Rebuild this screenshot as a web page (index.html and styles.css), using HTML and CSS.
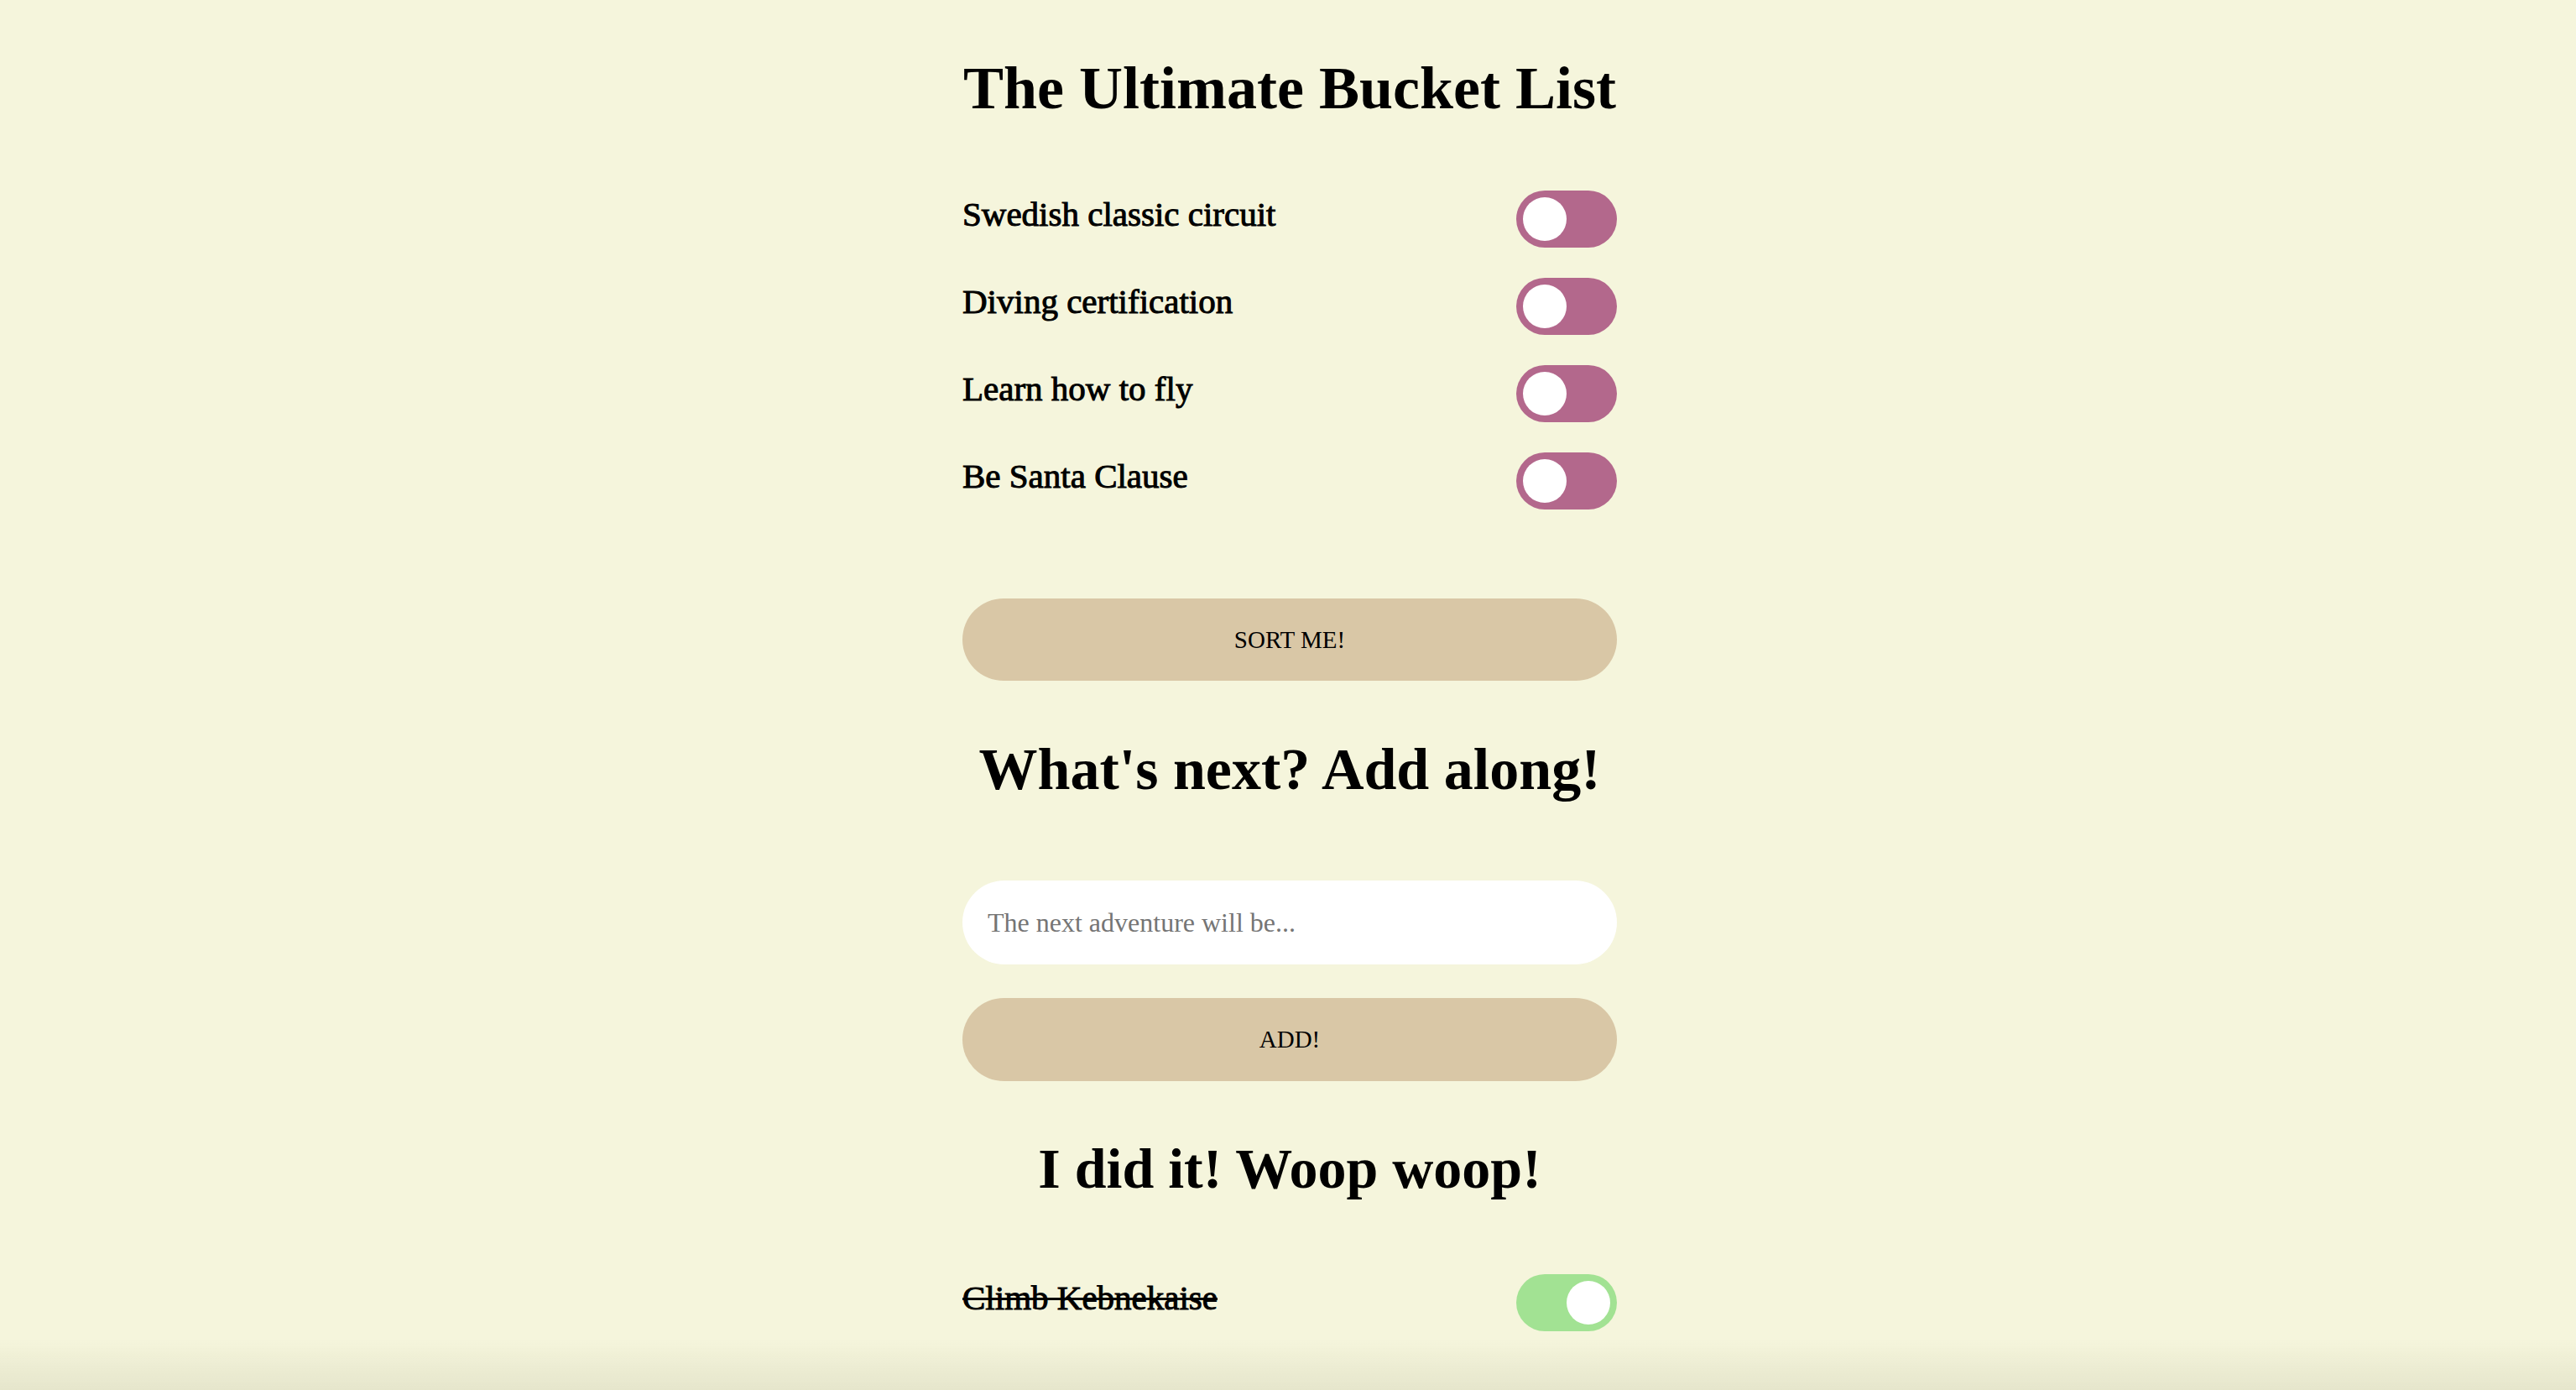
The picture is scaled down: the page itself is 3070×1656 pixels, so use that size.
FILE: index.html
```html
<!DOCTYPE html>
<html lang="en">
<head>
<meta charset="utf-8">
<title>The Ultimate Bucket List</title>
<link rel="stylesheet" href="styles.css">
</head>
<body>
<main class="app">
  <h1 class="title">The Ultimate Bucket List</h1>
  <ul class="list">
    <li class="item"><span class="item-label">Swedish classic circuit</span><label class="switch"><input type="checkbox"><span class="slider"></span></label></li>
    <li class="item"><span class="item-label">Diving certification</span><label class="switch"><input type="checkbox"><span class="slider"></span></label></li>
    <li class="item"><span class="item-label">Learn how to fly</span><label class="switch"><input type="checkbox"><span class="slider"></span></label></li>
    <li class="item"><span class="item-label">Be Santa Clause</span><label class="switch"><input type="checkbox"><span class="slider"></span></label></li>
  </ul>
  <button class="btn btn-sort" type="button">SORT ME!</button>
  <h2 class="subtitle subtitle-add">What's next? Add along!</h2>
  <form class="add-form">
    <input class="add-input" type="text" placeholder="The next adventure will be...">
    <button class="btn btn-add" type="button">ADD!</button>
  </form>
  <h2 class="subtitle subtitle-done">I did it! Woop woop!</h2>
  <ul class="list list-done">
    <li class="item item-done"><span class="item-label">Climb Kebnekaise</span><label class="switch"><input type="checkbox" checked><span class="slider"></span></label></li>
  </ul>
</main>
<div class="window-shade"></div>
</body>
</html>
```
FILE: styles.css
```css
html, body {
  margin: 0;
  padding: 0;
}
body {
  background: #f5f5dc;
  font-family: "Liberation Serif", "Times New Roman", serif;
  color: #000;
  min-height: 1656px;
  padding-left: 4px;
}
.app {
  width: 780px;
  margin: 0 auto;
  padding-top: 65px;
  display: flex;
  flex-direction: column;
}
.title {
  margin: 0;
  font-size: 72px;
  line-height: 80px;
  font-weight: bold;
  text-align: center;
}
.list {
  list-style: none;
  margin: 82px 0 0;
  padding: 0;
  display: flex;
  flex-direction: column;
  gap: 36px;
}
.item {
  display: flex;
  align-items: center;
  justify-content: space-between;
  height: 68px;
}
.item-label {
  font-size: 41px;
  line-height: 46px;
  font-weight: normal;
  -webkit-text-stroke: 1px #000;
  padding-bottom: 12px;
}
.item-done .item-label {
  text-decoration: line-through;
  text-decoration-thickness: 3px;
}
.switch {
  position: relative;
  display: block;
  width: 120px;
  height: 68px;
  flex: 0 0 auto;
}
.switch input {
  opacity: 0;
  width: 0;
  height: 0;
  margin: 0;
}
.slider {
  position: absolute;
  inset: 0;
  background: #b3688c;
  border-radius: 34px;
}
.slider::before {
  content: "";
  position: absolute;
  left: 8px;
  top: 8px;
  width: 52px;
  height: 52px;
  border-radius: 50%;
  background: #fff;
}
.switch input:checked + .slider {
  background: #a2e293;
}
.switch input:checked + .slider::before {
  left: 60px;
}
.btn {
  display: block;
  width: 100%;
  border: none;
  border-radius: 50px;
  background: #d9c7a6;
  color: #000;
  font-family: "Liberation Serif", "Times New Roman", serif;
  font-size: 29px;
  padding: 0;
}
.btn-sort {
  height: 98px;
  margin-top: 106px;
}
.subtitle {
  margin: 0;
  font-size: 70px;
  line-height: 80px;
  font-weight: bold;
  text-align: center;
}
.subtitle-add {
  margin-top: 66px;
}
.add-form {
  margin: 92px 0 0;
  display: flex;
  flex-direction: column;
  gap: 40px;
}
.add-input {
  box-sizing: border-box;
  width: 100%;
  height: 100px;
  border: none;
  border-radius: 50px;
  background: #fff;
  padding: 0 30px;
  font-family: "Liberation Serif", "Times New Roman", serif;
  font-size: 32px;
  color: #000;
  outline: none;
}
.add-input::placeholder {
  color: #757575;
}
.btn-add {
  height: 99px;
}
.subtitle-done {
  margin-top: 64px;
  font-size: 68px;
}
.list-done {
  margin-top: 86px;
}
.window-shade {
  position: fixed;
  left: 0;
  right: 0;
  bottom: 0;
  height: 60px;
  pointer-events: none;
  background: linear-gradient(to bottom, rgba(60, 60, 20, 0), rgba(60, 60, 20, 0.08));
}
```
